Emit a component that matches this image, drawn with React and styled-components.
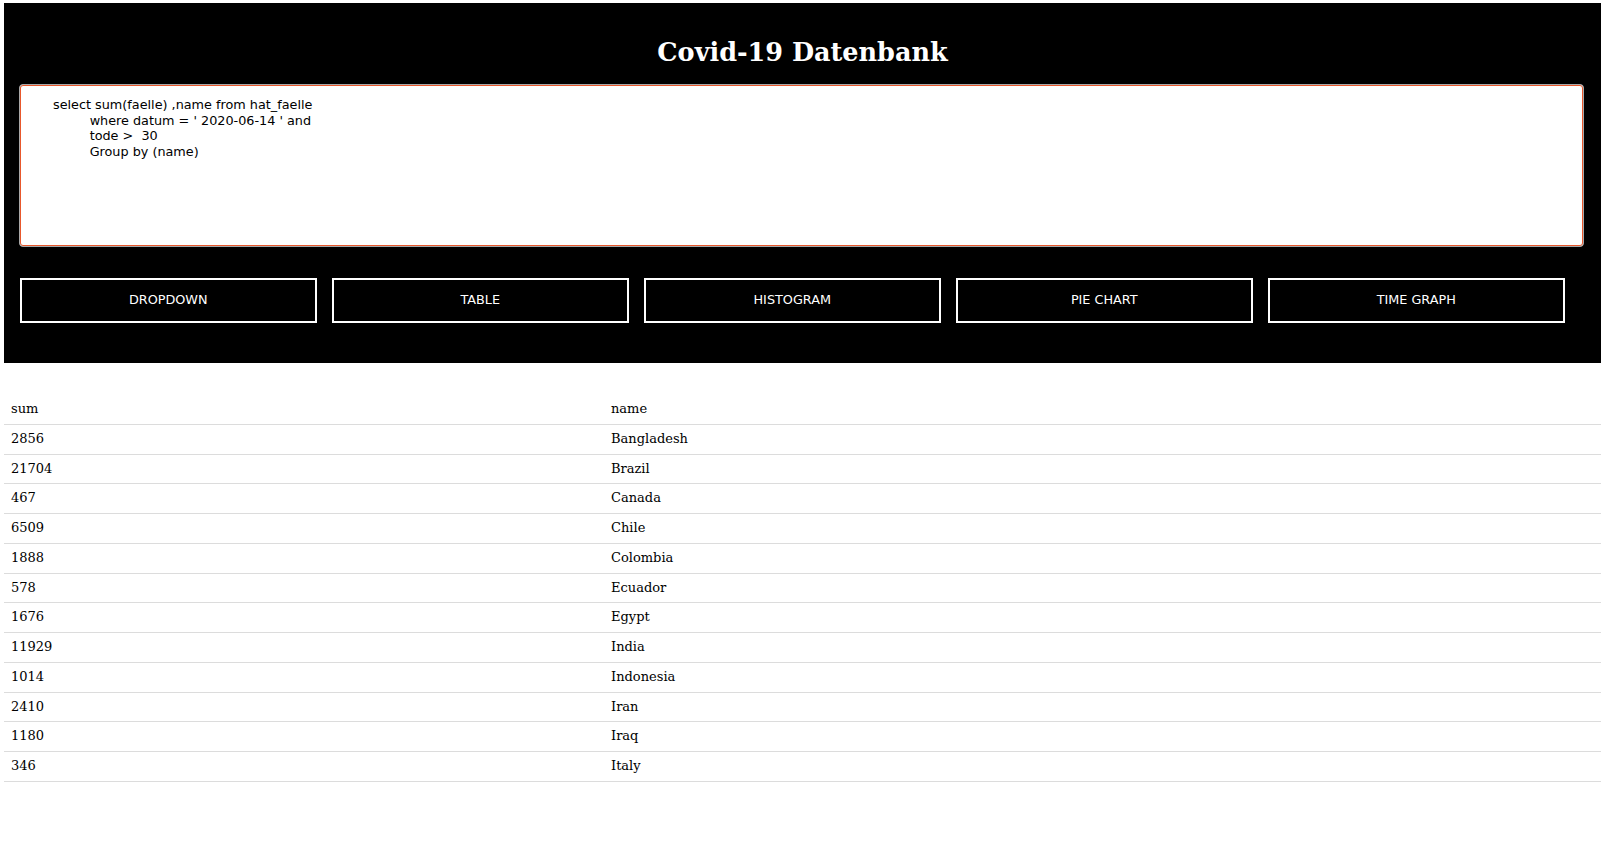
import React, { useEffect, useRef } from 'react';
import styled, { createGlobalStyle } from 'styled-components';

const GlobalStyle = createGlobalStyle`
  body {
    margin: 0;
    background: #fff;
    font-family: "DejaVu Serif", serif;
  }
`;

const QUERY = `select sum(faelle) ,name from hat_faelle
         where datum = ' 2020-06-14 ' and
         tode >  30
         Group by (name)`;

const BUTTONS = ['DROPDOWN', 'TABLE', 'HISTOGRAM', 'PIE CHART', 'TIME GRAPH'];

const ROWS = [
  [2856, 'Bangladesh'],
  [21704, 'Brazil'],
  [467, 'Canada'],
  [6509, 'Chile'],
  [1888, 'Colombia'],
  [578, 'Ecuador'],
  [1676, 'Egypt'],
  [11929, 'India'],
  [1014, 'Indonesia'],
  [2410, 'Iran'],
  [1180, 'Iraq'],
  [346, 'Italy']
];

const Page = styled.div`
  padding: 3px 0 0 4px;
`;

const Header = styled.header`
  background: #000;
  padding: 35px 0 40px 0;
`;

const Title = styled.h2`
  margin: 0 0 17px 0;
  text-align: center;
  color: #fff;
  font-family: "DejaVu Serif", serif;
  font-weight: bold;
  font-size: 25.5px;
  line-height: 29px;
`;

const QueryBox = styled.textarea`
  display: block;
  box-sizing: border-box;
  width: calc(100% - 32px);
  height: 163px;
  margin: 0 17px 0 15px;
  padding: 12px 33px;
  border: 1px solid #a8a8a8;
  border-radius: 4px;
  box-shadow: inset 0 0 0 1px #e8582c;
  outline: none;
  resize: none;
  font-family: "DejaVu Sans", sans-serif;
  font-size: 12.8px;
  line-height: 15.7px;
  color: #000;
  background: #fff;
  caret-color: #000;
`;

const ButtonRow = styled.div`
  display: flex;
  gap: 15.5px;
  padding: 31px 36.5px 0 16px;
`;

const ChartButton = styled.button`
  flex: 1;
  height: 45px;
  background: #000;
  color: #fff;
  border: 2px solid #fff;
  font-family: "DejaVu Sans", sans-serif;
  font-size: 12.8px;
  cursor: pointer;
  padding: 0 0 2px 0;
`;

const ResultTable = styled.table`
  width: 100%;
  margin-top: 32px;
  border-collapse: collapse;
  font-family: "DejaVu Serif", serif;
  font-size: 13px;
  color: #000;
`;

const Cell = styled.td`
  padding: 7px 7px;
  line-height: 14.75px;
  text-align: left;
  width: ${p => (p.first ? '586px' : 'auto')};
`;

const Row = styled.tr`
  border-bottom: 1px solid #dcdcdc;
`;

export default function App() {
  const queryRef = useRef(null);

  useEffect(() => {
    const el = queryRef.current;
    if (el) {
      el.focus();
      el.setSelectionRange(0, 0);
    }
  }, []);

  return (
    <Page>
      <GlobalStyle />
      <Header>
        <Title>Covid-19 Datenbank</Title>
        <QueryBox ref={queryRef} defaultValue={QUERY} spellCheck={false} />
        <ButtonRow>
          {BUTTONS.map(label => (
            <ChartButton key={label}>{label}</ChartButton>
          ))}
        </ButtonRow>
      </Header>
      <ResultTable>
        <tbody>
          <Row>
            <Cell first>sum</Cell>
            <Cell>name</Cell>
          </Row>
          {ROWS.map(([sum, name]) => (
            <Row key={name}>
              <Cell first>{sum}</Cell>
              <Cell>{name}</Cell>
            </Row>
          ))}
        </tbody>
      </ResultTable>
    </Page>
  );
}
